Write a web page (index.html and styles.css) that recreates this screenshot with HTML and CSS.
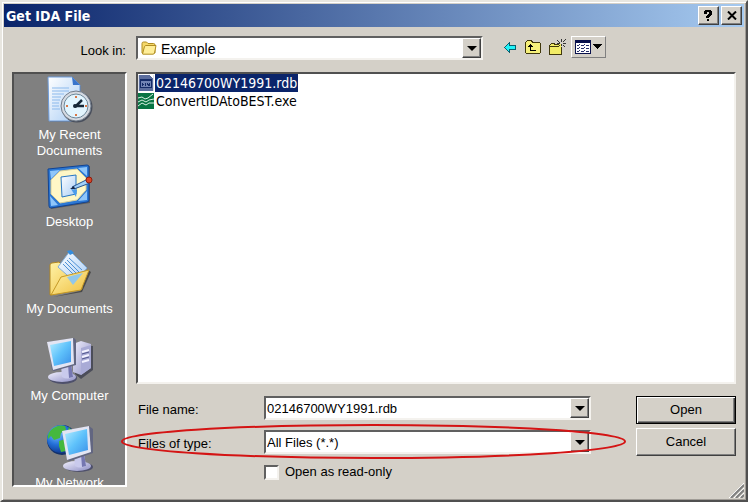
FILE: index.html
```
<!DOCTYPE html>
<html lang="en">

    <head>
        <meta charset="UTF-8" />
        <meta name="viewport" content="width=device-width, initial-scale=1.0" />
        <title>Get IDA File</title>
        <link rel="stylesheet" href="styles.css">
    </head>

    <body>
        <div class="dialog" role="dialog" aria-labelledby="dialog-title">
            <header class="titlebar">
                <h1 id="dialog-title">Get IDA File</h1>
                <button type="button" class="title-button" aria-label="Help">
                    <svg width="11" height="12" viewBox="0 0 11 12" shape-rendering="crispEdges">
                        <path d="M2 0h6v1h1v4h-1v1h-1v1h-1v1h-3v-2h1v-1h1v-1h1v-2h-2v2h-3v-3h1zM4 9h2v2h-2z" />
                    </svg>
                </button>
                <button type="button" class="title-button" aria-label="Close">
                    <svg width="10" height="9" viewBox="0 0 10 9">
                        <path d="M1 0.5L9 8.5M9 0.5L1 8.5" stroke="#000" stroke-width="2" />
                    </svg>
                </button>
            </header>

            <!-- Folder picker and toolbar -->
            <div class="look-row">
                <label class="look-label" for="look-in">Look in:</label>
                <div class="combo look-combo">
                    <svg class="folder-icon" width="16" height="14" viewBox="0 0 16 14">
                        <path d="M1 12V2.500Q1 1 2.500 1H5.500L7 2.500H12.500Q14 2.500 14 4V12Z" fill="#f5d869" stroke="#b08d22" />
                        <path d="M1.500 13L3.500 5.500Q4 4.500 5 4.500H15L13.500 12Q13 13.200 12 13.200H2Z" fill="#ffee98" stroke="#b08d22" />
                    </svg>
                    <select id="look-in">
                        <option>Example</option>
                    </select>
                    <span class="combo-arrow"></span>
                </div>
                <div class="toolbar">
                    <button type="button" class="tool" aria-label="Back">
                        <svg width="13" height="11" viewBox="0 0 13 11" shape-rendering="crispEdges">
                            <path d="M0 5h1v-1h1v-1h1v-1h1v-1h1v-1h1v3h6v5h-6v3h-1v-1h-1v-1h-1v-1h-1v-1h-1v-1h-1z" fill="#086070" />
                            <path d="M1 5h1v-1h1v-1h1v-1h1v2h6v3h-6v2h-1v-1h-1v-1h-1v-1h-1z" fill="#20f4f8" />
                        </svg>
                    </button>
                    <button type="button" class="tool" aria-label="Up one level">
                        <svg width="16" height="14" viewBox="0 0 16 14" shape-rendering="crispEdges">
                            <path d="M1 2h1v-1h5v1h1v1h7v10h-14z" fill="#f6f07a" />
                            <path d="M2 0h5v1h1v1h7v1h1v10h-1v1h-14v-1h-1v-11h1v-1h1zM2 1v1h-1v11h14v-10h-8v-1h-1v-1z" fill="#40380c" fill-rule="evenodd" />
                            <path d="M5 4h1v1h1v1h1v1h-2v3h5v1h-6v-4h-2v-1h1v-1h1z" fill="#000" />
                        </svg>
                    </button>
                    <button type="button" class="tool" aria-label="Create new folder">
                        <svg width="17" height="16" viewBox="0 0 17 16" shape-rendering="crispEdges">
                            <path d="M1 5h1v-1h4v1h6v10h-11z" fill="#f2ec66" />
                            <path d="M2 4h4v1h4v1h-5v-1h-3zM1 5h1v1h-1zM0 6h1v9h-1zM0 15h13v1h-13zM12 8h1v7h-1zM1 7h9v1h-9z" fill="#40380c" />
                            <path d="M12 0h1v3h-1zM12 5h1v2h-1zM8 1h1v1h-1zM9 2h1v1h-1zM10 3h1v1h-1zM16 0h1v1h-1zM15 1h1v1h-1zM14 2h1v1h-1zM8 4h3v1h-3zM14 4h3v1h-3zM14 6h1v1h-1zM15 7h1v1h-1zM10 6h1v1h-1z" fill="#333" />
                        </svg>
                    </button>
                    <button type="button" class="tool tool-raised" aria-label="View menu">
                        <svg width="27" height="14" viewBox="0 0 27 14" shape-rendering="crispEdges">
                            <path d="M0 0h16v14h-16z" fill="#08104c" />
                            <path d="M1 3h14v10h-14z" fill="#fff" />
                            <path d="M2 5h2v1h-2zM6 5h3v1h-3zM11 5h3v1h-3zM2 8h2v1h-2zM6 8h3v1h-3zM11 8h3v1h-3zM2 11h2v1h-2zM6 11h3v1h-3zM11 11h3v1h-3zM4 4h1v1h-1zM9 4h1v1h-1zM4 7h1v1h-1zM9 7h1v1h-1zM4 10h1v1h-1zM9 10h1v1h-1z" fill="#28306c" />
                            <path d="M18 4h9v1h-1v1h-1v1h-1v1h-1v1h-1v-1h-1v-1h-1v-1h-1v-1h-1z" fill="#000" />
                        </svg>
                    </button>
                </div>
            </div>

            <div class="content">
                <nav class="places">
                    <button type="button" class="place">
                        <svg width="48" height="48" viewBox="0 0 48 48">
                            <defs>
                                <linearGradient id="paper" x1="0" y1="0" x2="1" y2="1">
                                    <stop offset="0" stop-color="#fff" />
                                    <stop offset="1" stop-color="#a9cdf5" />
                                </linearGradient>
                                <linearGradient id="screen" x1="0" y1="0" x2="1" y2="1">
                                    <stop offset="0" stop-color="#b4edff" />
                                    <stop offset="0.500" stop-color="#5fc2fb" />
                                    <stop offset="1" stop-color="#3b90e8" />
                                </linearGradient>
                                <linearGradient id="folder" x1="0" y1="0" x2="1" y2="1">
                                    <stop offset="0" stop-color="#fff3a8" />
                                    <stop offset="1" stop-color="#efbd3c" />
                                </linearGradient>
                                <linearGradient id="case" x1="0" y1="0" x2="1" y2="1">
                                    <stop offset="0" stop-color="#f0effc" />
                                    <stop offset="1" stop-color="#8f90c6" />
                                </linearGradient>
                                <radialGradient id="globe" cx="0.350" cy="0.300" r="0.800">
                                    <stop offset="0" stop-color="#7cc4ff" />
                                    <stop offset="0.500" stop-color="#2470d8" />
                                    <stop offset="1" stop-color="#0a2c80" />
                                </radialGradient>
                            </defs>
                            <path d="M3 3H28L35 10V46H4Z" fill="#555" opacity=".5" />
                            <path d="M2 1H26L34 9V45H3Z" fill="url(#paper)" stroke="#6e9cdb" />
                            <path d="M26 1L34 9H27Z" fill="#3974cc" />
                            <path d="M6 12H23M6 15H23M6 18H18M6 21H15M6 24H14M6 27H13M6 30H13M6 33H14" stroke="#8bb9ec" />
                            <circle cx="31" cy="31" r="15.500" fill="#494f5c" />
                            <circle cx="30" cy="30" r="15" fill="#d5dae2" stroke="#727d8b" />
                            <circle cx="30" cy="30" r="12" fill="#e2f5ff" stroke="#6e8799" />
                            <path d="M29 31L36 24M28 30H38" stroke="#172838" stroke-width="2.500" />
                            <circle cx="29" cy="30" r="2" fill="#172838" />
                            <path d="M29 20h2v2h-2zM29 38h2v2h-2zM20 29h2v2h-2zM39 29h2v2h-2z" fill="#d97848" />
                        </svg>
                        <span>My Recent<br>Documents</span>
                    </button>
                    <button type="button" class="place">
                        <svg width="48" height="48" viewBox="0 0 48 48">
                            <path d="M4 7L44 3V40L5 46Z" fill="#444" opacity=".6" />
                            <path d="M2 6L41 2Q43 2 43 4V37Q43 39 41 39L5 45Q3 45 3 43Z" fill="#2c78d4" stroke="#114393" />
                            <path d="M4 8L14 7L5 16ZM32 5L41 4V13ZM4 33L12 42L5 43ZM41 28V37L32 38Z" fill="#8fc6fa" />
                            <path d="M14 8L31 6L40 15V27L31 37L14 40L5 31V17Z" fill="#fff7c6" stroke="#d7cf9b" />
                            <path d="M15 14L30 12V31L16 34Z" fill="url(#paper)" stroke="#2676c3" />
                            <path d="M25 26L30 34L31 27Z" fill="#4b9cec" />
                            <path d="M26 24L42 16L44 20L28 26Z" fill="#a1d0fa" stroke="#27538e" />
                            <path d="M28 23L24 26L29 26Z" fill="#172646" />
                            <circle cx="43" cy="17" r="3" fill="#d64425" stroke="#8c1d10" />
                        </svg>
                        <span>Desktop</span>
                    </button>
                    <button type="button" class="place">
                        <svg width="48" height="48" viewBox="0 0 48 48">
                            <path d="M7 47L36 42L45 22L42 20L34 41Z" fill="#333" opacity=".7" />
                            <path d="M4 45V15Q4 13 6 13L13 12L17 16L36 12V39Z" fill="url(#folder)" stroke="#b28720" />
                            <path d="M24 1L41 18L29 32L12 17Z" fill="url(#paper)" stroke="#83afdb" />
                            <path d="M21 1L25 0L28 3L24 5Z" fill="#338ddf" />
                            <path d="M23 8L36 20M21 10L34 23M19 12L32 25M17 14L30 27" stroke="#4f91d5" />
                            <path d="M5 45L15 27L43 20L35 40Z" fill="url(#folder)" stroke="#c59927" />
                            <path d="M21 27L37 23L27 35Z" fill="#91c7eb" />
                        </svg>
                        <span>My Documents</span>
                    </button>
                    <button type="button" class="place">
                        <svg width="48" height="48" viewBox="0 0 48 48">
                            <path d="M29 9L47 9V33L35 42L29 37Z" fill="#343849" opacity=".7" />
                            <path d="M27 7L35 4L45 7V31L35 38L27 35Z" fill="url(#case)" />
                            <path d="M35 11L45 8V31L35 38Z" fill="#a9abd6" />
                            <path d="M36 15L43 13M36 20L43 18M36 25L43 23" stroke="#f2f2ff" stroke-width="2" />
                            <path d="M36 17L43 15M36 22L43 20" stroke="#52578e" />
                            <ellipse cx="17" cy="41" rx="14" ry="6" fill="#4e506b" />
                            <ellipse cx="16" cy="40" rx="14" ry="5" fill="url(#case)" />
                            <path d="M15 28L25 26L27 40Q21 43 16 40Z" fill="#c9caec" />
                            <path d="M22 27L25 26L27 40L23 41Z" fill="#7577b1" />
                            <path d="M2 5L28 1L30 3V28L8 34L6 33Z" fill="#626681" />
                            <path d="M1 5L27 1L28 27L7 33Z" fill="#e3e5f3" />
                            <path d="M4 8L25 4V25L8 29Z" fill="url(#screen)" />
                        </svg>
                        <span>My Computer</span>
                    </button>
                    <button type="button" class="place">
                        <svg width="48" height="48" viewBox="0 0 48 48">
                            <circle cx="16" cy="16" r="15" fill="#12306a" />
                            <circle cx="15" cy="15" r="14" fill="url(#globe)" />
                            <path d="M5 6Q11 0 19 2L20 6L15 9L14 14L8 16L5 12L2 15Q1 10 5 6ZM13 17L20 15L24 20L20 27L15 28L13 22ZM23 3L28 9L25 14L21 9Z" fill="#45b83e" />
                            <ellipse cx="33" cy="43" rx="14" ry="5" fill="#4e506b" />
                            <ellipse cx="31" cy="42" rx="14" ry="5" fill="url(#case)" />
                            <path d="M28 31L38 29L40 42Q34 45 29 42Z" fill="#c9caec" />
                            <path d="M35 30L38 29L40 42L36 43Z" fill="#7577b1" />
                            <path d="M17 8L43 2L47 5V29L24 37L21 36Z" fill="#626681" />
                            <path d="M16 7L43 2L45 28L21 36Z" fill="#e3e5f3" />
                            <path d="M19 10L41 5L42 26L23 31Z" fill="url(#screen)" />
                        </svg>
                        <span>My Network</span>
                    </button>
                </nav>

                <main class="main">
                    <ul class="file-list">
                        <li class="file selected">
                            <svg width="16" height="16" viewBox="0 0 16 16" shape-rendering="crispEdges">
                                <path d="M0 0h16v16h-16z" fill="#dcdfe8" />
                                <path d="M1 0h11l3 3v13h-14z" fill="#5b6d9e" />
                                <path d="M12 0h3v3h-1v-1h-1v-1h-1z" fill="#fff" />
                                <path d="M2 4h12v9h-12z" fill="#142b68" />
                                <path d="M3 6h10v6h-10z" fill="#7184b5" />
                                <path d="M4 8h1v1h1v1h-1v1h-1zM7 8h1v3h-1zM9 8h1v1h1v-1h1v3h-2v-1h-1z" fill="#142b68" />
                            </svg>
                            <span>02146700WY1991.rdb</span>
                        </li>
                        <li class="file">
                            <svg width="16" height="16" viewBox="0 0 16 16">
                                <path d="M0 0h16v16h-16z" fill="#087443" />
                                <path d="M0 5L4 4L7 6L10 5L15 1M0 9L4 7L8 9L11 7L16 6M0 13L4 10L8 12L11 10L16 10" fill="none" stroke="#d8f0e2" />
                            </svg>
                            <span>ConvertIDAtoBEST.exe</span>
                        </li>
                    </ul>

                    <form class="form">
                        <div class="fields">
                            <div class="field">
                                <label for="file-name">File name:</label>
                                <div class="combo">
                                    <input type="text" id="file-name" value="02146700WY1991.rdb">
                                    <button type="button" class="combo-arrow" aria-label="Recent file names"></button>
                                </div>
                            </div>
                            <div class="field">
                                <label for="file-type">Files of type:</label>
                                <div class="combo">
                                    <select id="file-type">
                                        <option>All Files (*.*)</option>
                                    </select>
                                    <span class="combo-arrow"></span>
                                </div>
                                <svg class="highlight" viewBox="0 0 506 36" preserveAspectRatio="none">
                                    <ellipse cx="253" cy="18" rx="252" ry="17" fill="none" stroke="#d41414" stroke-width="2" />
                                </svg>
                            </div>
                            <div class="read-only">
                                <input type="checkbox" id="read-only">
                                <label for="read-only">Open as read-only</label>
                            </div>
                        </div>
                        <div class="actions">
                            <button type="submit" class="action default">Open</button>
                            <button type="button" class="action">Cancel</button>
                        </div>
                    </form>
                </main>
            </div>

            <svg class="grip" width="15" height="15" viewBox="0 0 15 15">
                <path d="M0 15L15 0M5 15L15 5M10 15L15 10" stroke="#fff" />
                <path d="M2 15L15 2M7 15L15 7M12 15L15 12" stroke="#808080" stroke-width="2" />
            </svg>
        </div>
    </body>

</html>
```
FILE: styles.css
```
* {
    box-sizing: border-box;
}

body {
    margin: 0;
    background: #d4d0c8;
    color: #000;
    font-family: "Liberation Sans", Arial, sans-serif;
    font-size: 13px;
    line-height: 16px;
}

button,
input,
select {
    font: inherit;
    color: inherit;
    margin: 0;
    padding: 0;
    border: 0;
    border-radius: 0;
}

svg {
    display: block;
    flex: none;
}

.dialog {
    position: relative;
    display: flex;
    flex-direction: column;
    height: 100vh;
    padding: 2px;
    background: #d4d0c8;
    border: 2px solid;
    border-color: #e8e6e0 #505050 #505050 #e8e6e0;
    box-shadow: inset 1px 1px #fff, inset -1px -1px #a09c96;
}

/* Title bar */
.titlebar {
    display: flex;
    align-items: center;
    gap: 2px;
    height: 23px;
    padding: 0 2px;
    background: linear-gradient(to right, #0a246a, #a6caf0);
}

.titlebar h1 {
    flex: 1;
    margin: 0;
    color: #fff;
    font-family: Tahoma, "DejaVu Sans Condensed", sans-serif;
    font-size: 14px;
    font-weight: bold;
}

.title-button,
.combo-arrow,
.action {
    background: #d4d0c8;
    border: 1px solid;
    border-color: #fff #404040 #404040 #fff;
    box-shadow: inset -1px -1px #808080;
}

.title-button {
    display: flex;
    align-items: center;
    justify-content: center;
    width: 21px;
    height: 19px;
}

/* Combo boxes */
.combo {
    display: flex;
    align-items: stretch;
    height: 24px;
    background: #fff;
    border: 2px solid;
    border-color: #606060 #f4f2ee #f4f2ee #606060;
}

.combo input,
.combo select {
    flex: 1;
    min-width: 0;
    padding: 1px 1px 0;
    background: transparent;
    appearance: none;
    outline: none;
}

.combo-arrow {
    display: flex;
    align-items: center;
    justify-content: center;
    flex: none;
    width: 19px;
    pointer-events: none;
}

.combo-arrow::before {
    content: "";
    border: solid transparent;
    border-width: 5px 5px 0;
    border-top-color: #000;
}

.look-row {
    display: flex;
    gap: 10px;
    padding: 9px 8px 12px;
}

.look-label {
    flex: none;
    width: 114px;
    padding-top: 7px;
    text-align: right;
}

.look-combo {
    flex: 0 1 347px;
    align-items: center;
    font-size: 14px;
}

.look-combo select,
.look-combo .combo-arrow {
    align-self: stretch;
}

.folder-icon {
    margin: 0 3px;
}

.toolbar {
    display: flex;
    align-items: center;
    gap: 2px;
    height: 22px;
    padding-left: 8px;
}

.tool {
    padding: 0 3px;
    background: transparent;
}

.tool-raised {
    padding: 3px;
    border: 1px solid;
    border-color: #fff #808080 #808080 #fff;
}

/* Places bar and main area */
.content {
    flex: 1;
    display: flex;
    gap: 9px;
    min-height: 0;
    padding: 0 8px 11px;
}

.places {
    flex: none;
    width: 115px;
    padding-top: 2px;
    overflow: hidden;
    background: #808080;
    border: 2px solid;
    border-color: #505050 #fff #fff #505050;
}

.place {
    display: flex;
    flex-direction: column;
    align-items: center;
    gap: 3px;
    width: 100%;
    height: 87px;
    background: transparent;
    color: #fff;
    text-align: center;
}

.main {
    flex: 1;
    display: flex;
    flex-direction: column;
    gap: 12px;
    min-width: 0;
}

.file-list {
    flex: 1;
    margin: 0;
    padding: 0;
    list-style: none;
    background: #fff;
    border: 2px solid;
    border-color: #505050 #f4f2ee #f4f2ee #505050;
    font-family: Tahoma, "DejaVu Sans Condensed", sans-serif;
    font-size: 14px;
    line-height: 18px;
}

.file {
    display: flex;
    align-items: center;
    gap: 1px;
}

.file span {
    padding: 0 1px;
}

.file.selected span {
    background: #0a246a;
    color: #fff;
}

/* File name, type and buttons */
.form {
    display: flex;
    gap: 45px;
    padding-bottom: 7px;
}

.fields {
    flex: 1;
    display: flex;
    flex-direction: column;
    gap: 10px;
}

.field {
    position: relative;
    display: flex;
}

.field label {
    flex: none;
    width: 128px;
    padding: 6px 2px 0;
}

.field .combo {
    flex: 1;
}

.highlight {
    position: absolute;
    top: -6px;
    left: -15px;
    width: calc(100% + 50px);
    height: 35px;
    pointer-events: none;
}

.read-only {
    display: flex;
    align-items: center;
    gap: 6px;
    padding-left: 128px;
}

.read-only input {
    width: 15px;
    height: 15px;
    appearance: none;
    background: #fff;
    border: 2px solid;
    border-color: #606060 #f4f2ee #f4f2ee #606060;
}

.actions {
    display: flex;
    flex-direction: column;
    gap: 4px;
    width: 100px;
}

.action {
    height: 28px;
}

.action.default {
    border-color: #000;
    box-shadow: inset 1px 1px #fff, inset -1px -1px #404040, inset -2px -2px #808080;
}

.grip {
    position: absolute;
    right: 2px;
    bottom: 2px;
}
```
